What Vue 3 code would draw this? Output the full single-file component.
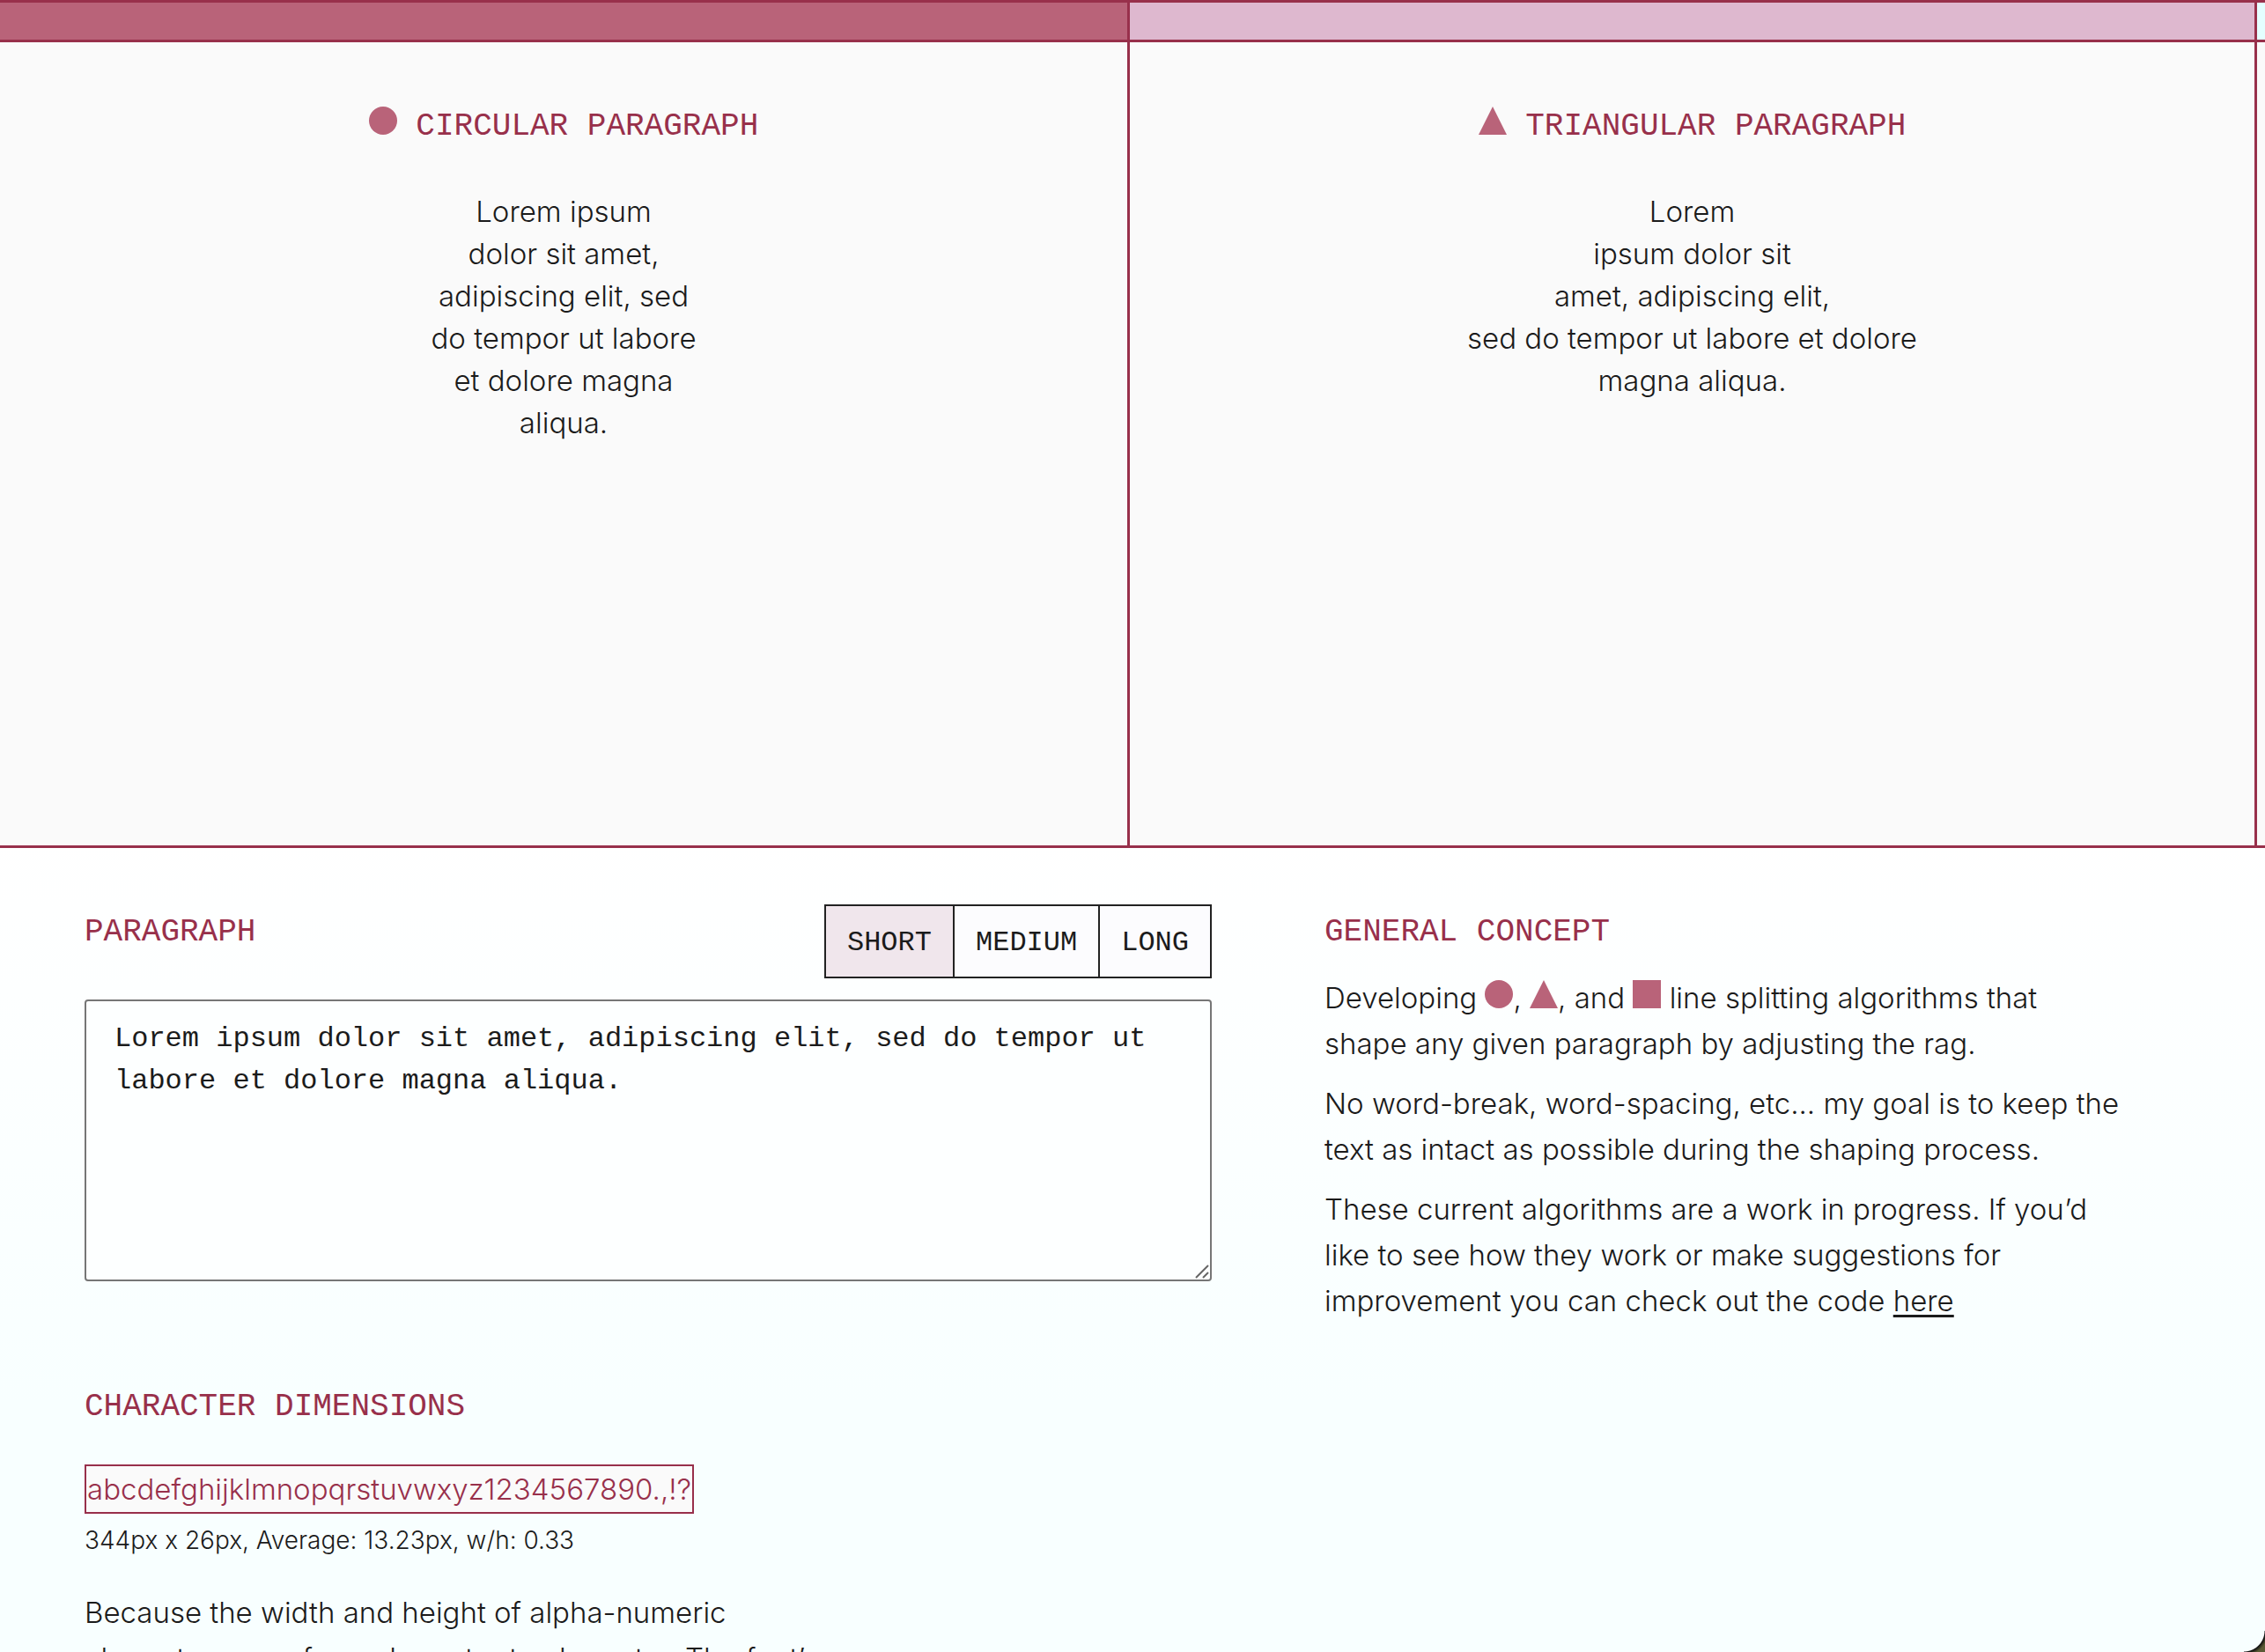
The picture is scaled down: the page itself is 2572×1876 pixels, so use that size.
<script setup>
import { computed, h, ref } from 'vue'

const samples = {
  short: 'Lorem ipsum dolor sit amet, adipiscing elit, sed do tempor ut labore et dolore magna aliqua.',
  medium:
    'Lorem ipsum dolor sit amet, adipiscing elit, sed do tempor ut labore et dolore magna aliqua. Ut enim ad minim veniam, quis nostrud exercitation ullamco laboris.',
  long:
    'Lorem ipsum dolor sit amet, adipiscing elit, sed do tempor ut labore et dolore magna aliqua. Ut enim ad minim veniam, quis nostrud exercitation ullamco laboris nisi ut aliquip ex ea commodo consequat. Duis aute irure dolor in reprehenderit in voluptate velit.'
}
const sizes = Object.keys(samples)
const size = ref('short')
const text = ref(samples.short)

function choose(name) {
  size.value = name
  text.value = samples[name]
}

// Splits the words over lines that hold the given numbers of words.
function split(source, counts) {
  const words = source.split(/\s+/).filter(Boolean)
  const lines = []
  let i = 0
  for (let n = 0; i < words.length; n++) {
    const count = counts[Math.min(n, counts.length - 1)]
    lines.push(words.slice(i, i + count).join(' '))
    i += count
  }
  return lines
}

const panels = computed(() => [
  { shape: 'circle', title: 'Circular paragraph', lines: split(text.value, [2, 3, 3, 4, 3]) },
  { shape: 'triangle', title: 'Triangular paragraph', lines: split(text.value, [1, 3, 3, 7]) }
])

const Shape = ({ kind }) =>
  h('svg', { viewBox: '0 0 32 32', width: 32, height: 32, fill: '#b96379', 'aria-hidden': 'true' }, [
    kind === 'circle'
      ? h('circle', { cx: 16, cy: 16, r: 16 })
      : kind === 'triangle'
        ? h('polygon', { points: '16,0 32,32 0,32' })
        : h('rect', { width: 32, height: 32 })
  ])
Shape.props = ['kind']
</script>

<template>
  <div class="page">
    <section class="panels">
      <article v-for="panel in panels" :key="panel.shape" class="panel" :class="panel.shape">
        <div class="strip"></div>
        <div class="body">
          <h2><Shape :kind="panel.shape" />&nbsp;{{ panel.title }}</h2>
          <p class="shaped">
            <span v-for="(line, i) in panel.lines" :key="i">{{ line }}</span>
          </p>
        </div>
      </article>
      <div class="panel next">
        <div class="strip"></div>
        <div class="body"></div>
      </div>
    </section>

    <section class="details">
      <div class="editor">
        <div class="bar">
          <h2><label for="paragraph">Paragraph</label></h2>
          <div class="sizes">
            <button
              v-for="name in sizes"
              :key="name"
              type="button"
              :class="{ active: name === size }"
              @click="choose(name)"
            >{{ name }}</button>
          </div>
        </div>
        <div class="field">
          <textarea id="paragraph" v-model="text" spellcheck="false"></textarea>
          <svg class="grip" viewBox="0 0 18 18" width="18" height="18" aria-hidden="true">
            <path d="M2 16 16 2M10 16l6-6" fill="none" stroke="#666" stroke-width="2" />
          </svg>
        </div>

        <h2 class="dimensions">Character dimensions</h2>
        <span class="ruler">abcdefghijklmnopqrstuvwxyz1234567890.,!?</span>
        <p class="measure">344px x 26px, Average: 13.23px, w/h: 0.33</p>
        <p class="note">
          Because the width and height of alpha-numeric<br />
          characters vary from character to character. The font’s
        </p>
      </div>

      <div class="concept">
        <h2>General concept</h2>
        <p>
          Developing <Shape kind="circle" />, <Shape kind="triangle" />, and
          <Shape kind="square" /> line splitting algorithms that shape any given paragraph by
          adjusting the rag.
        </p>
        <p>
          No word-break, word-spacing, etc... my goal is to keep the text as intact as possible
          during the shaping process.
        </p>
        <p>
          These current algorithms are a work in progress. If you’d like to see how they work or
          make suggestions for improvement you can check out the code <a href="#">here</a>
        </p>
      </div>
    </section>
    <div class="corner"></div>
  </div>
</template>

<style>
body {
  background: #f8ffff;
}
</style>

<style scoped>
.page {
  --wine: #98304b;
  height: 100vh;
  overflow: hidden;
  background: linear-gradient(#ffffff 50%, #f8ffff 85%);
  color: #1b1b1b;
  font-family: Inter, 'Liberation Sans', sans-serif;
  font-size: 33px;
  font-weight: 300;
}
h2,
p {
  margin: 0;
}
h2 {
  color: var(--wine);
  font: 400 36px/48px 'Liberation Mono', monospace;
  text-transform: uppercase;
}
.panels {
  display: grid;
  grid-template-columns: 1fr 1fr 12px;
  border: solid var(--wine);
  border-width: 3px 0;
}
.panel {
  display: flex;
  flex-direction: column;
  min-height: 957px;
}
.panel + .panel {
  border-left: 3px solid var(--wine);
}
.strip {
  height: 42px;
  border-bottom: 3px solid var(--wine);
  background: #b96379;
}
.triangle .strip {
  background: #deb8cf;
}
.next .strip {
  background: #e4ffff;
}
.body {
  flex: 1;
  padding-top: 72px;
  background: #fafafa;
  text-align: center;
}
.shaped {
  margin-top: 48px;
  line-height: 48px;
}
.shaped span {
  display: block;
}
.details {
  display: grid;
  grid-template-columns: 4fr 3fr;
  gap: 128px;
  margin-right: 12px;
  padding: 64px 96px;
}
.bar {
  display: flex;
  justify-content: space-between;
}
.bar h2,
.concept h2 {
  margin-top: 8px;
}
.sizes {
  display: flex;
  border: 2px solid #222;
}
button {
  height: 80px;
  padding: 4px 24px 0;
  border: 0;
  border-radius: 0;
  background: #fcfcfe;
  color: #1b1b1b;
  font: 400 32px/48px 'Liberation Mono', monospace;
  text-transform: uppercase;
}
button + button {
  border-left: 2px solid #222;
}
button.active {
  background: #f0e6ec;
}
.field {
  position: relative;
  margin-top: 24px;
}
textarea {
  display: block;
  box-sizing: border-box;
  width: 100%;
  height: 320px;
  padding: 19px 32px;
  border: 2px solid #767676;
  border-radius: 4px;
  background: #fdffff;
  color: #1b1b1b;
  font: 400 32px/48px 'Liberation Mono', monospace;
  resize: none;
}
.grip {
  position: absolute;
  right: 2px;
  bottom: 2px;
}
.dimensions {
  margin-top: 119px;
}
.ruler {
  display: inline-block;
  margin-top: 41px;
  padding: 0 1px;
  border: 2px solid var(--wine);
  background: #fafafa;
  color: var(--wine);
  line-height: 52px;
}
.measure {
  margin-top: 6px;
  font-size: 28px;
  line-height: 48px;
}
.note {
  margin-top: 32px;
  line-height: 52px;
}
.concept p {
  max-width: 912px;
  margin-top: 16px;
  line-height: 52px;
}
.concept h2 {
  margin-bottom: 24px;
}
a {
  color: inherit;
  text-decoration-thickness: 3px;
  text-underline-offset: 4px;
}
.corner {
  position: fixed;
  right: 0;
  bottom: 0;
  width: 24px;
  height: 24px;
  background: radial-gradient(circle at 0 0, transparent 23px, #111 24px, #5a5a35 28px);
}
</style>
